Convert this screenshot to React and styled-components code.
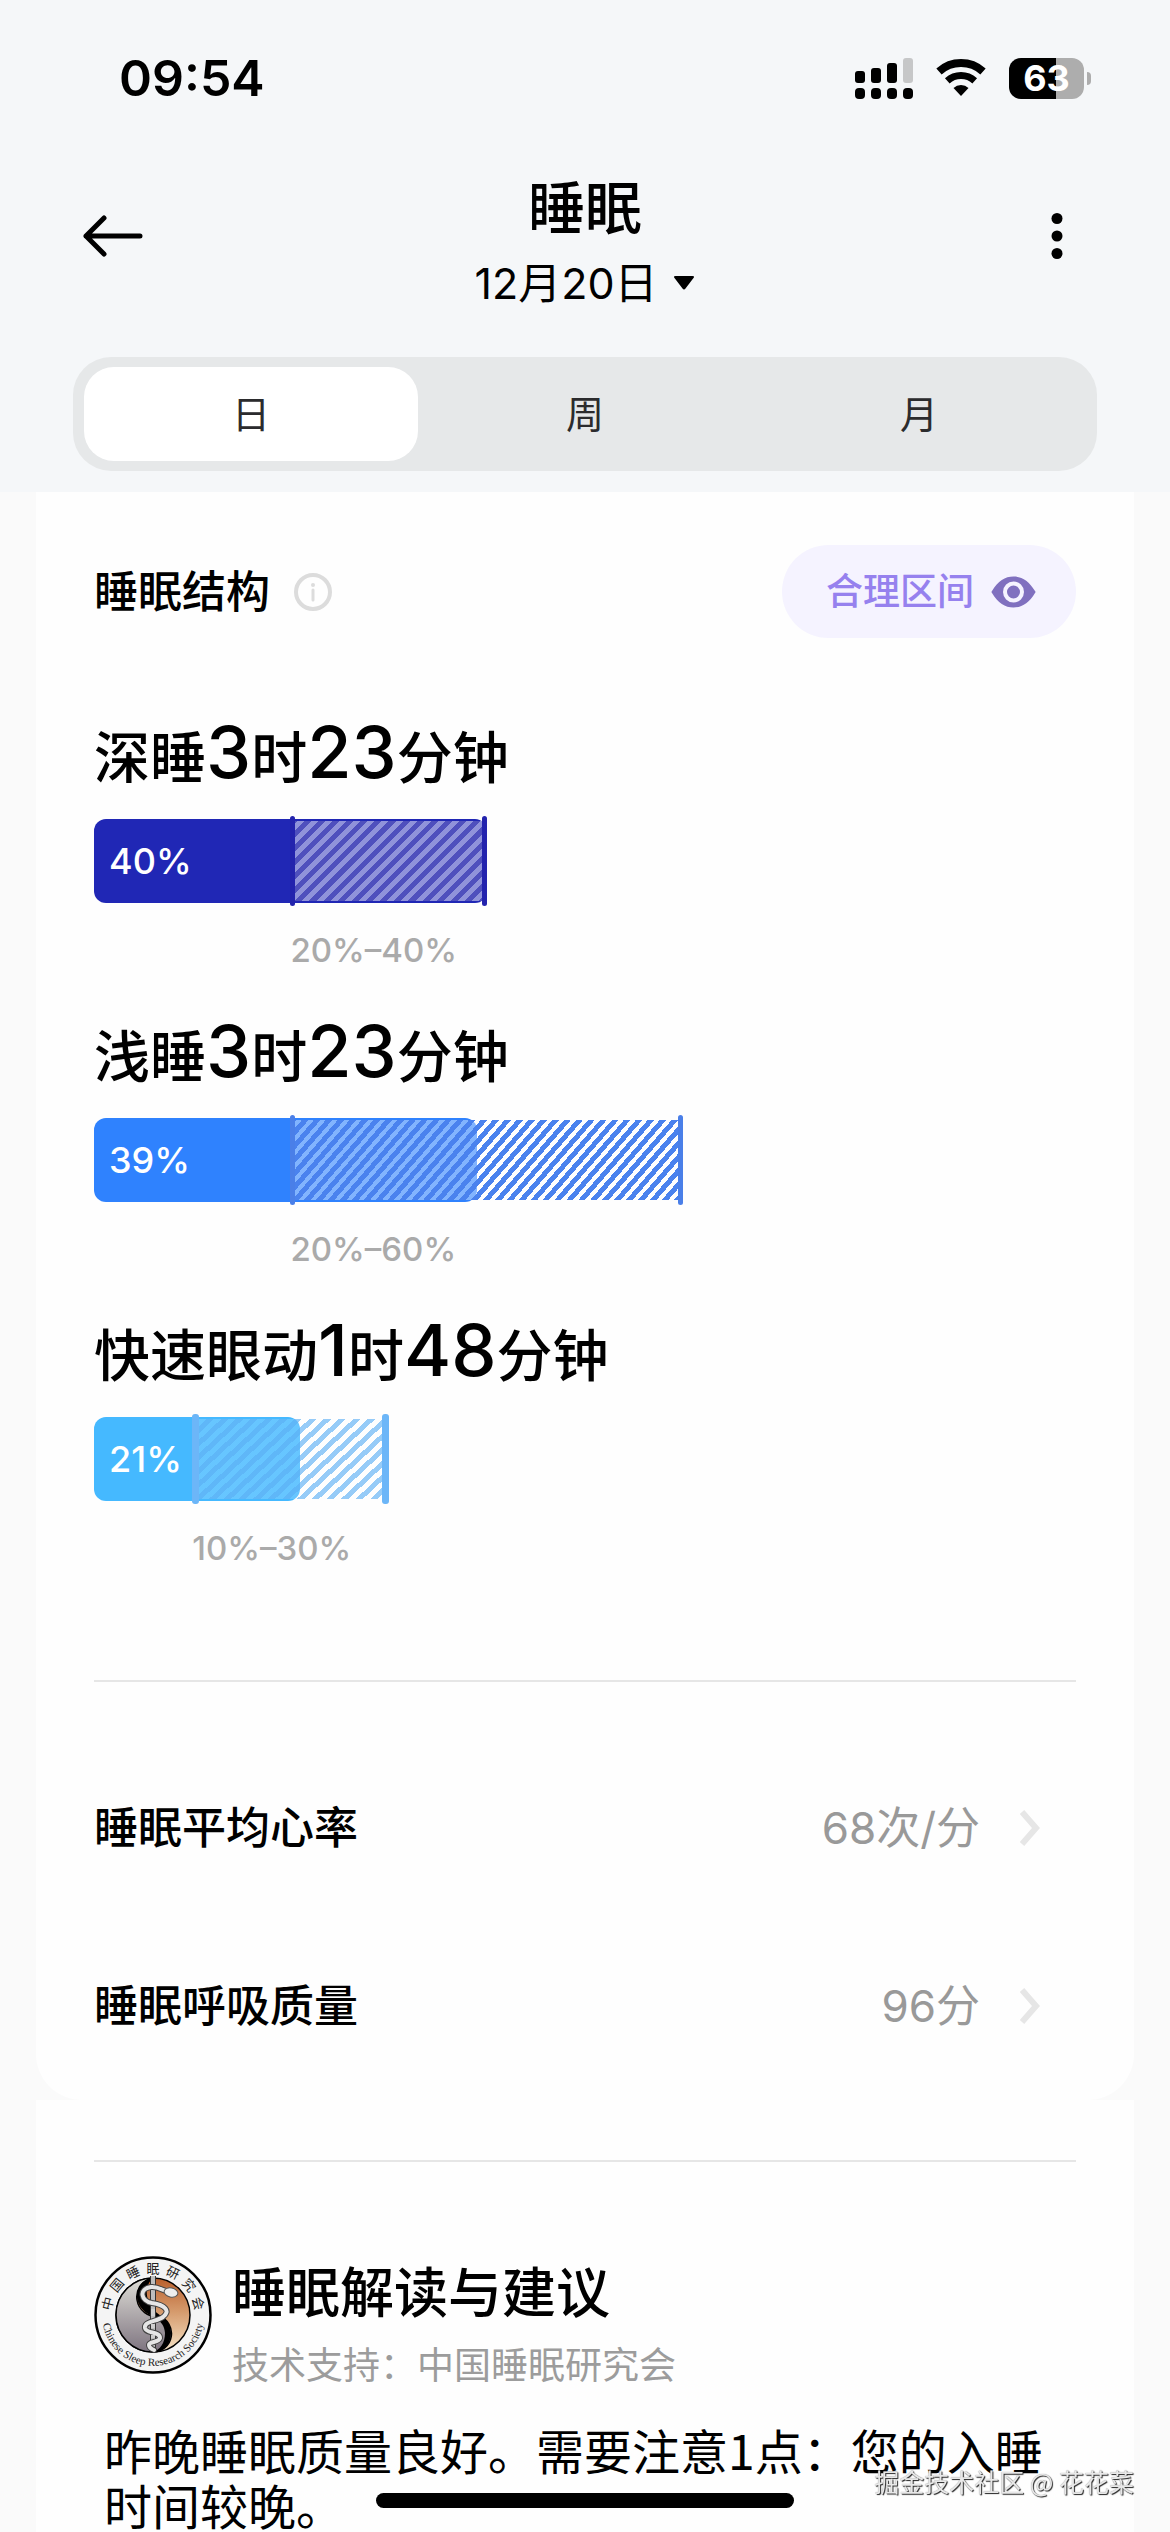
import React, { useState } from "react";
import styled, { createGlobalStyle, css } from "styled-components";

const GlobalStyle = createGlobalStyle`
  * { box-sizing: border-box; }
  body {
    margin: 0;
    background: #fafafa;
    color: #000;
    font-family: Inter, "Noto Sans CJK SC", sans-serif;
  }
  button { font: inherit; color: inherit; border: 0; padding: 0; background: none; cursor: pointer; }
  h1, h2, h3, p { margin: 0; font-weight: inherit; }
  svg { display: block; flex: none; }
`;

const Screen = styled.div`
  height: 100vh;
  display: flex;
  flex-direction: column;
  overflow: hidden;
`;

const Header = styled.header`
  flex: none;
  padding-bottom: 21px;
  background: #f5f7f9;
`;

const StatusBar = styled.div`
  height: 156px;
  padding: 0 79px 0 119px;
  display: flex;
  align-items: center;
  justify-content: space-between;
`;

const Clock = styled.time`
  font-size: 50px;
  font-weight: 600;
`;

const StatusIcons = styled.div`
  display: flex;
  align-items: center;
  gap: 23px;
`;

const Battery = styled.div`
  display: flex;
  align-items: center;
  gap: 3px;
`;

const BatteryBody = styled.div`
  width: 75px;
  height: 41px;
  border-radius: 12px;
  background: linear-gradient(to right, #000 63%, #adadad 63%);
  color: #fff;
  font-size: 36px;
  font-weight: 700;
  line-height: 41px;
  text-align: center;
`;

const BatteryTip = styled.div`
  width: 4px;
  height: 13px;
  border-radius: 0 4px 4px 0;
  background: #adadad;
`;

const NavBar = styled.nav`
  height: 160px;
  padding: 0 83px;
  display: grid;
  grid-template-columns: 60px 1fr 60px;
  align-items: center;
`;

const IconButton = styled.button`
  display: flex;
  justify-content: ${(p) => (p.$end ? "flex-end" : "flex-start")};
`;

const NavTitle = styled.div`
  display: flex;
  flex-direction: column;
  align-items: center;
`;

const PageTitle = styled.h1`
  font-size: 57px;
  font-weight: 500;
  line-height: 94px;
`;

const DateButton = styled.button`
  display: flex;
  align-items: center;
  gap: 14px;
  font-size: 43px;
  line-height: 54px;
`;

const Segments = styled.div`
  margin: 41px 73px 0;
  padding: 10px 11px;
  display: grid;
  grid-template-columns: repeat(3, 1fr);
  border-radius: 38px;
  background: #e6e8e9;
`;

const Segment = styled.button`
  height: 94px;
  border-radius: 30px;
  font-family: "Noto Sans CJK SC", sans-serif;
  font-size: 38px;
  line-height: 90px;
  padding-bottom: 4px;
  color: #2b2b2d;
  ${(p) => p.$active && css`background: #fff;`}
`;

const Content = styled.main`
  flex: 1;
  min-height: 0;
  padding: 0 36px;
  overflow-y: auto;
  scrollbar-width: none;
`;

const Card = styled.section`
  padding: ${(p) => (p.$first ? "53px 58px 5px" : "60px 58px 0")};
  background: #fefefe;
  ${(p) => p.$first && css`border-radius: 0 0 46px 46px;`}
`;

const CardHead = styled.div`
  display: flex;
  align-items: center;
  justify-content: space-between;
`;

const HeadLabel = styled.div`
  display: flex;
  align-items: center;
  gap: 24px;
`;

const Label = styled.h2`
  font-size: 44px;
  font-weight: 500;
  line-height: 60px;
`;

const RangeButton = styled.button`
  height: 93px;
  padding: 0 40px 0 44px;
  display: flex;
  align-items: center;
  gap: 17px;
  border-radius: 47px;
  background: #f5f3ff;
  color: #9681ee;
  font-size: 37px;
  font-weight: 500;
  line-height: 60px;
`;

const Stages = styled.div`
  margin-top: 74px;
  display: flex;
  flex-direction: column;
  gap: 41px;
`;

const StageTitle = styled.h3`
  height: 90px;
  margin-bottom: 17px;
  font-size: 56px;
  font-weight: 500;
  line-height: 92px;
  white-space: nowrap;
`;

const Figure = styled.span`
  font-size: 72px;
  line-height: 1;
`;

const Track = styled.div`
  position: relative;
  height: 84px;
`;

const Fill = styled.div`
  height: 100%;
  padding-left: 15px;
  border-radius: 12px;
  background: ${(p) => p.$color};
  color: #fff;
  font-size: 36px;
  font-weight: 500;
  line-height: 84px;
`;

const Hatch = styled.div`
  position: absolute;
  top: 2px;
  bottom: 2px;
  background: repeating-linear-gradient(
    ${(p) => p.$angle}deg,
    ${(p) => p.$stripe} 0 5px,
    ${(p) => p.$gap} 5px ${(p) => p.$period}px
  );
  &::before,
  &::after {
    content: "";
    position: absolute;
    top: -5px;
    bottom: -5px;
    width: ${(p) => p.$tickWidth}px;
    border-radius: 3px;
    background: ${(p) => p.$tick};
  }
  &::before { left: 0; }
  &::after { right: 0; }
`;

const RangeText = styled.p`
  margin-top: 27px;
  color: #aaa;
  font-size: 33px;
  font-weight: 500;
  line-height: 40px;
`;

const Divider = styled.hr`
  height: 2px;
  margin: 0;
  border: 0;
  background: #e6e6e6;
`;

const Spacer = styled.div`
  height: ${(p) => p.$size}px;
`;

const LinkRow = styled.a`
  height: 178px;
  padding-right: 36px;
  display: flex;
  align-items: center;
  gap: 40px;
  color: inherit;
  text-decoration: none;
`;

const RowValue = styled.span`
  margin-left: auto;
  color: #999;
  font-size: 44px;
  line-height: 60px;
`;

const AdviceHead = styled.div`
  margin-top: 84px;
  display: flex;
  align-items: center;
  gap: 20px;
`;

const AdviceTitle = styled.h2`
  font-size: 54px;
  font-weight: 500;
  line-height: 96px;
`;

const Support = styled.p`
  color: #9c9c9c;
  font-family: "Noto Sans CJK SC", sans-serif;
  font-size: 37px;
  line-height: 42px;
`;

const Advice = styled.p`
  margin: 38px 0 0 10px;
  font-family: "Noto Sans CJK SC", sans-serif;
  font-size: 48px;
  line-height: 55px;
`;

const HomeIndicator = styled.div`
  position: fixed;
  left: 50%;
  bottom: 24px;
  width: 418px;
  height: 15px;
  border-radius: 8px;
  background: #000;
  transform: translateX(-50%);
`;

const Watermark = styled.div`
  position: fixed;
  right: 36px;
  bottom: 33px;
  color: #e8e8e8;
  font-family: "Noto Sans CJK SC", sans-serif;
  font-size: 25px;
  line-height: 36px;
  text-shadow: 1px 1px 1px #222, 0 0 1px #888;
`;

const SignalIcon = () => (
  <svg width="58" height="41" viewBox="0 0 58 41">
    <rect x="0" y="13" width="10" height="12" rx="3" />
    <rect x="16" y="10" width="10" height="15" rx="3" />
    <rect x="32" y="5" width="10" height="20" rx="3" />
    <rect x="48" y="0" width="10" height="25" rx="3" fill="#c6c7c8" />
    {[0, 16, 32, 48].map((x) => (
      <rect key={x} x={x} y="30" width="10" height="11" rx="4" />
    ))}
  </svg>
);

const WifiIcon = () => (
  <svg width="50" height="38" viewBox="0 0 50 38" fill="none" stroke="#000">
    <path d="M3 12.5A33 33 0 0 1 47 12.5" strokeWidth="8" />
    <path d="M11.3 21.8A20.5 20.5 0 0 1 38.7 21.8" strokeWidth="7" />
    <path d="M25 37L17.5 29A11 11 0 0 1 32.5 29Z" fill="#000" stroke="none" />
  </svg>
);

const BackIcon = () => (
  <svg width="60" height="42" viewBox="0 0 60 42" fill="none" stroke="#000" strokeWidth="5" strokeLinecap="round" strokeLinejoin="round">
    <path d="M3 21H57M21 3L3 21L21 39" />
  </svg>
);

const MoreIcon = () => (
  <svg width="36" height="46" viewBox="0 0 36 46">
    {[5.5, 23, 40.5].map((y) => (
      <circle key={y} cx="6" cy={y} r="5.5" />
    ))}
  </svg>
);

const CaretIcon = () => (
  <svg width="24" height="16" viewBox="0 0 24 16">
    <path d="M3.5 1H20.5Q23 1 21.500 3L13.500 13.500Q12 15.500 10.500 13.500L2.500 3Q1 1 3.500 1Z" />
  </svg>
);

const InfoIcon = () => (
  <svg width="38" height="38" viewBox="0 0 38 38" fill="none" stroke="#dcdcdc">
    <circle cx="19" cy="19" r="17" strokeWidth="4" />
    <path d="M19 17V27" strokeWidth="3" strokeLinecap="round" />
    <circle cx="19" cy="12" r="2" fill="#dcdcdc" stroke="none" />
  </svg>
);

const EyeIcon = () => (
  <svg width="45" height="32" viewBox="0 0 45 32">
    <path d="M1 17Q0 16 1 15C7 5 14 .5 22.5 .5S38 5 44 15Q45 16 44 17C38 27 31 31.5 22.5 31.5S7 27 1 17Z" fill="#8070bf" />
    <circle cx="22.5" cy="16" r="8.5" fill="none" stroke="#f5f3ff" strokeWidth="4" />
  </svg>
);

const ChevronIcon = () => (
  <svg width="20" height="36" viewBox="0 0 20 36" fill="none" stroke="#e6e6e6" strokeWidth="6">
    <path d="M2 2L16 18L2 34" />
  </svg>
);

const SocietyLogo = () => (
  <svg width="118" height="118" viewBox="0 0 118 118" role="img" aria-label="中国睡眠研究会">
    <defs>
      <linearGradient id="warm" x1="0" y1="0" x2="0" y2="1">
        <stop offset="0" stopColor="#b95f2c" />
        <stop offset=".45" stopColor="#d59a6c" />
        <stop offset="1" stopColor="#f6e3c6" />
      </linearGradient>
      <linearGradient id="cool" x1="0" y1="0" x2="0" y2="1">
        <stop offset="0" stopColor="#deddd6" />
        <stop offset="1" stopColor="#7e7480" />
      </linearGradient>
      <path id="arcTop" d="M17 59A42 42 0 0 1 101 59" />
      <path id="arcBottom" d="M8 59A51 51 0 0 0 110 59" />
    </defs>
    <circle cx="59" cy="59" r="57.5" fill="#f4f4f4" stroke="#000" strokeWidth="2.5" />
    <circle cx="59" cy="59" r="37" fill="url(#warm)" stroke="#000" strokeWidth="1.5" />
    <path d="M59 22A37 37 0 0 0 59 96A18.5 18.5 0 0 0 65 60A18.5 18.5 0 0 1 59 22Z" fill="url(#cool)" stroke="#000" strokeWidth="1.5" />
    <path d="M59 22C42 24 38 43 49 54C57 62 70 62 71 77C71 87 66 94 59 96C70 96 77 88 77 77C77 63 65 60 60 54C51 44 50 30 59 22Z" fill="#000" />
    <path d="M59 20V95" stroke="#333" strokeWidth="6" />
    <path d="M59 20V94" stroke="#bdbdbd" strokeWidth="4" />
    <g fill="none" strokeLinecap="round">
      <path d="M79 36C70 37 66 30 57 31C44 33 47 45 58 47C71 49 77 55 69 61C62 66 50 65 51 72C52 78 66 75 66 82C65 87 55 85 55 89Q55 92 60 94" stroke="#444" strokeWidth="6" />
      <path d="M79 36C70 37 66 30 57 31C44 33 47 45 58 47C71 49 77 55 69 61C62 66 50 65 51 72C52 78 66 75 66 82C65 87 55 85 55 89Q55 92 60 94" stroke="#e6e6e6" strokeWidth="4" />
    </g>
    <ellipse cx="77" cy="36.5" rx="7" ry="4.5" fill="#eee" stroke="#555" strokeWidth="1" transform="rotate(12 77 36.5)" />
    <path d="M59 53V60M59 68V72M59 79V82" stroke="#cfcfcf" strokeWidth="4" />
    <text fontFamily="Noto Sans CJK SC, sans-serif" fontSize="13" fill="#222" textAnchor="middle">
      {[..."中国睡眠研究会"].map((c, i) => (
        <textPath key={c} href="#arcTop" startOffset={`${8 + i * 14}%`}>{c}</textPath>
      ))}
    </text>
    <text fontFamily="Liberation Serif, serif" fontSize="11" fill="#222" textAnchor="middle">
      <textPath href="#arcBottom" startOffset="50%">Chinese Sleep Research Society</textPath>
    </text>
  </svg>
);

const stages = [
  {
    name: "深睡", hours: 3, minutes: 23, percent: 40, from: 20, to: 40, color: "#2027b5",
    hatch: { $angle: 135, $period: 10, $stripe: "#4f50bd", $gap: "rgba(255,255,255,.5)", $tick: "#2323ad", $tickWidth: 5 },
  },
  {
    name: "浅睡", hours: 3, minutes: 23, percent: 39, from: 20, to: 60, color: "#2f82fe",
    hatch: { $angle: 131, $period: 9, $stripe: "#4a82ee", $gap: "rgba(255,255,255,.4)", $tick: "#4a7fe8", $tickWidth: 5 },
  },
  {
    name: "快速眼动", hours: 1, minutes: 48, percent: 21, from: 10, to: 30, color: "#45b9ff",
    hatch: { $angle: 137, $period: 10, $stripe: "rgba(106,182,245,.7)", $gap: "rgba(255,255,255,.18)", $tick: "#6cb6f8", $tickWidth: 7 },
  },
];

function Stage({ name, hours, minutes, percent, from, to, color, hatch }) {
  return (
    <div>
      <StageTitle>
        {name}<Figure>{hours}</Figure>时<Figure>{minutes}</Figure>分钟
      </StageTitle>
      <Track>
        <Fill $color={color} style={{ width: `${percent}%` }}>{percent}%</Fill>
        <Hatch {...hatch} style={{ left: `${from}%`, width: `${to - from}%` }} />
      </Track>
      <RangeText style={{ marginLeft: `${from}%` }}>{from}%–{to}%</RangeText>
    </div>
  );
}

export default function App() {
  const [period, setPeriod] = useState("日");
  return (
    <>
      <GlobalStyle />
      <Screen>
        <Header>
          <StatusBar>
            <Clock>09:54</Clock>
            <StatusIcons>
              <SignalIcon />
              <WifiIcon />
              <Battery>
                <BatteryBody>63</BatteryBody>
                <BatteryTip />
              </Battery>
            </StatusIcons>
          </StatusBar>
          <NavBar>
            <IconButton aria-label="返回"><BackIcon /></IconButton>
            <NavTitle>
              <PageTitle>睡眠</PageTitle>
              <DateButton>12月20日<CaretIcon /></DateButton>
            </NavTitle>
            <IconButton $end aria-label="更多"><MoreIcon /></IconButton>
          </NavBar>
          <Segments>
            {["日", "周", "月"].map((p) => (
              <Segment key={p} $active={p === period} aria-pressed={p === period} onClick={() => setPeriod(p)}>{p}</Segment>
            ))}
          </Segments>
        </Header>
        <Content>
          <Card $first>
            <CardHead>
              <HeadLabel>
                <Label>睡眠结构</Label>
                <IconButton aria-label="说明"><InfoIcon /></IconButton>
              </HeadLabel>
              <RangeButton>合理区间<EyeIcon /></RangeButton>
            </CardHead>
            <Stages>
              {stages.map((s) => <Stage key={s.name} {...s} />)}
            </Stages>
            <Spacer $size={112} />
            <Divider />
            <Spacer $size={57} />
            <LinkRow href="#heart-rate">
              <Label>睡眠平均心率</Label>
              <RowValue>68次/分</RowValue>
              <ChevronIcon />
            </LinkRow>
            <LinkRow href="#breathing">
              <Label>睡眠呼吸质量</Label>
              <RowValue>96分</RowValue>
              <ChevronIcon />
            </LinkRow>
          </Card>
          <Card>
            <Divider />
            <AdviceHead>
              <SocietyLogo />
              <div>
                <AdviceTitle>睡眠解读与建议</AdviceTitle>
                <Support>技术支持：中国睡眠研究会</Support>
              </div>
            </AdviceHead>
            <Advice>昨晚睡眠质量良好。需要注意1点：您的入睡时间较晚。</Advice>
          </Card>
        </Content>
      </Screen>
      <Watermark>掘金技术社区 @ 花花菜</Watermark>
      <HomeIndicator />
    </>
  );
}
